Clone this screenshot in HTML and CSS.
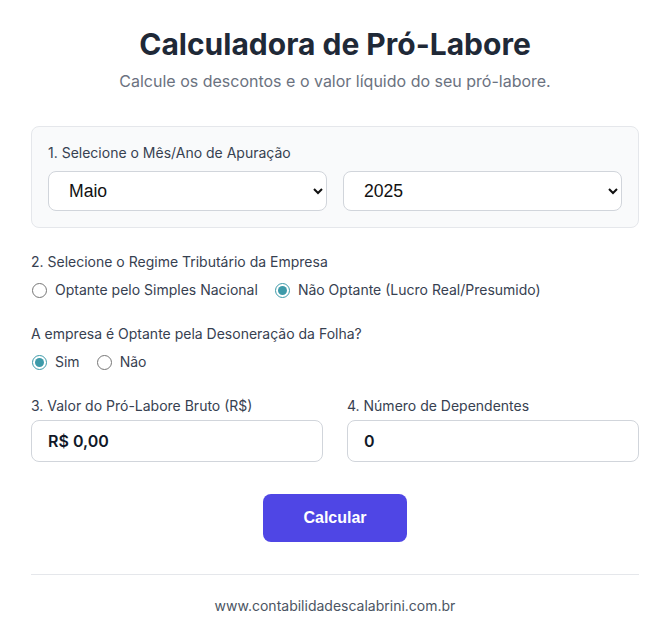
FILE: index.html
```html
<!DOCTYPE html>
<html lang="pt-BR">
<head>
    <meta charset="UTF-8">
    <meta name="viewport" content="width=device-width, initial-scale=1.0">
    <title>Calculadora de Pró-Labore</title>
    <link rel="stylesheet" href="styles.css">
</head>
<body>
    <div class="container">
        <h1>Calculadora de Pró-Labore</h1>
        <p class="subtitle">Calcule os descontos e o valor líquido do seu pró-labore.</p>

        <form id="calc-form">
            <div class="periodo">
                <label class="field-label">1. Selecione o Mês/Ano de Apuração</label>
                <div class="row">
                    <select name="mes">
                        <option>Janeiro</option>
                        <option>Fevereiro</option>
                        <option>Março</option>
                        <option>Abril</option>
                        <option selected>Maio</option>
                        <option>Junho</option>
                        <option>Julho</option>
                        <option>Agosto</option>
                        <option>Setembro</option>
                        <option>Outubro</option>
                        <option>Novembro</option>
                        <option>Dezembro</option>
                    </select>
                    <select name="ano">
                        <option>2024</option>
                        <option selected>2025</option>
                    </select>
                </div>
            </div>

            <div class="group">
                <label class="field-label">2. Selecione o Regime Tributário da Empresa</label>
                <div class="options">
                    <label class="option"><input type="radio" name="regime" value="simples"> Optante pelo Simples Nacional</label>
                    <label class="option"><input type="radio" name="regime" value="normal" checked> Não Optante (Lucro Real/Presumido)</label>
                </div>
            </div>

            <div class="group">
                <label class="field-label">A empresa é Optante pela Desoneração da Folha?</label>
                <div class="options">
                    <label class="option"><input type="radio" name="desoneracao" value="sim" checked> Sim</label>
                    <label class="option"><input type="radio" name="desoneracao" value="nao"> Não</label>
                </div>
            </div>

            <div class="row values">
                <div class="field">
                    <label class="field-label">3. Valor do Pró-Labore Bruto (R$)</label>
                    <input type="text" name="bruto" value="R$ 0,00">
                </div>
                <div class="field">
                    <label class="field-label">4. Número de Dependentes</label>
                    <input type="number" name="dependentes" value="0" min="0">
                </div>
            </div>

            <div class="actions">
                <button type="submit" class="btn">Calcular</button>
            </div>
        </form>

        <div class="footer">
            <a href="#">www.contabilidadescalabrini.com.br</a>
        </div>
    </div>

    <script>
        document.getElementById('calc-form').addEventListener('submit', function (event) {
            event.preventDefault();
        });
    </script>
</body>
</html>
```

FILE: styles.css
```css
* {
    margin: 0;
    padding: 0;
    box-sizing: border-box;
}

body {
    font-family: 'Inter', 'Noto Sans', sans-serif;
    background: #fff;
    color: #374151;
}

.container {
    padding: 26px 25px 0 31px;
}

h1 {
    font-size: 30px;
    line-height: 36px;
    font-weight: 700;
    color: #1f2937;
    text-align: center;
}

.subtitle {
    margin-top: 7px;
    font-size: 16px;
    line-height: 24px;
    color: #6b7280;
    text-align: center;
}

form {
    margin-top: 33px;
}

.field-label {
    display: block;
    font-size: 14px;
    line-height: 20px;
    color: #374151;
}

.periodo {
    background: #f9fafb;
    border: 1px solid #e5e7eb;
    border-radius: 8px;
    padding: 16px;
}

.periodo .field-label {
    margin-bottom: 8px;
}

.row {
    display: flex;
    gap: 16px;
}

select {
    flex: 1;
    height: 40px;
    padding: 0 12px 0 16px;
    border: 1px solid #d1d5db;
    border-radius: 8px;
    background: #fff;
    font-family: 'Liberation Sans', Arial, sans-serif;
    font-size: 17.6px;
    color: #111;
}

.group {
    margin-top: 24px;
}

.group .field-label {
    margin-bottom: 8px;
}

.options {
    display: flex;
    gap: 16px;
}

.option {
    display: flex;
    align-items: center;
    gap: 8px;
    font-size: 14px;
    line-height: 20px;
    color: #374151;
}

.option input {
    width: 15px;
    height: 15px;
    margin: 0 0 0 1px;
    accent-color: #3d9aa9;
}

.values {
    margin-top: 24px;
    gap: 24px;
}

.field {
    flex: 1;
}

.field .field-label {
    margin-bottom: 4px;
}

.field input {
    width: 100%;
    height: 42px;
    padding: 0 16px;
    border: 1px solid #d1d5db;
    border-radius: 8px;
    font-family: 'Inter', sans-serif;
    font-size: 16px;
    font-weight: 600;
    color: #111827;
}

.field input::-webkit-inner-spin-button {
    -webkit-appearance: none;
}

.actions {
    margin-top: 32px;
    text-align: center;
}

.btn {
    width: 144px;
    height: 48px;
    background: #4f46e5;
    color: #fff;
    border: none;
    border-radius: 8px;
    font-family: 'Liberation Sans', Arial, sans-serif;
    font-size: 16px;
    font-weight: 700;
    cursor: pointer;
}

.btn:hover {
    background: #4338ca;
}

.footer {
    margin-top: 32px;
    border-top: 1px solid #e5e7eb;
    padding-top: 20px;
    text-align: center;
}

.footer a {
    font-size: 14px;
    line-height: 20px;
    color: #4b5563;
    text-decoration: none;
}
```
